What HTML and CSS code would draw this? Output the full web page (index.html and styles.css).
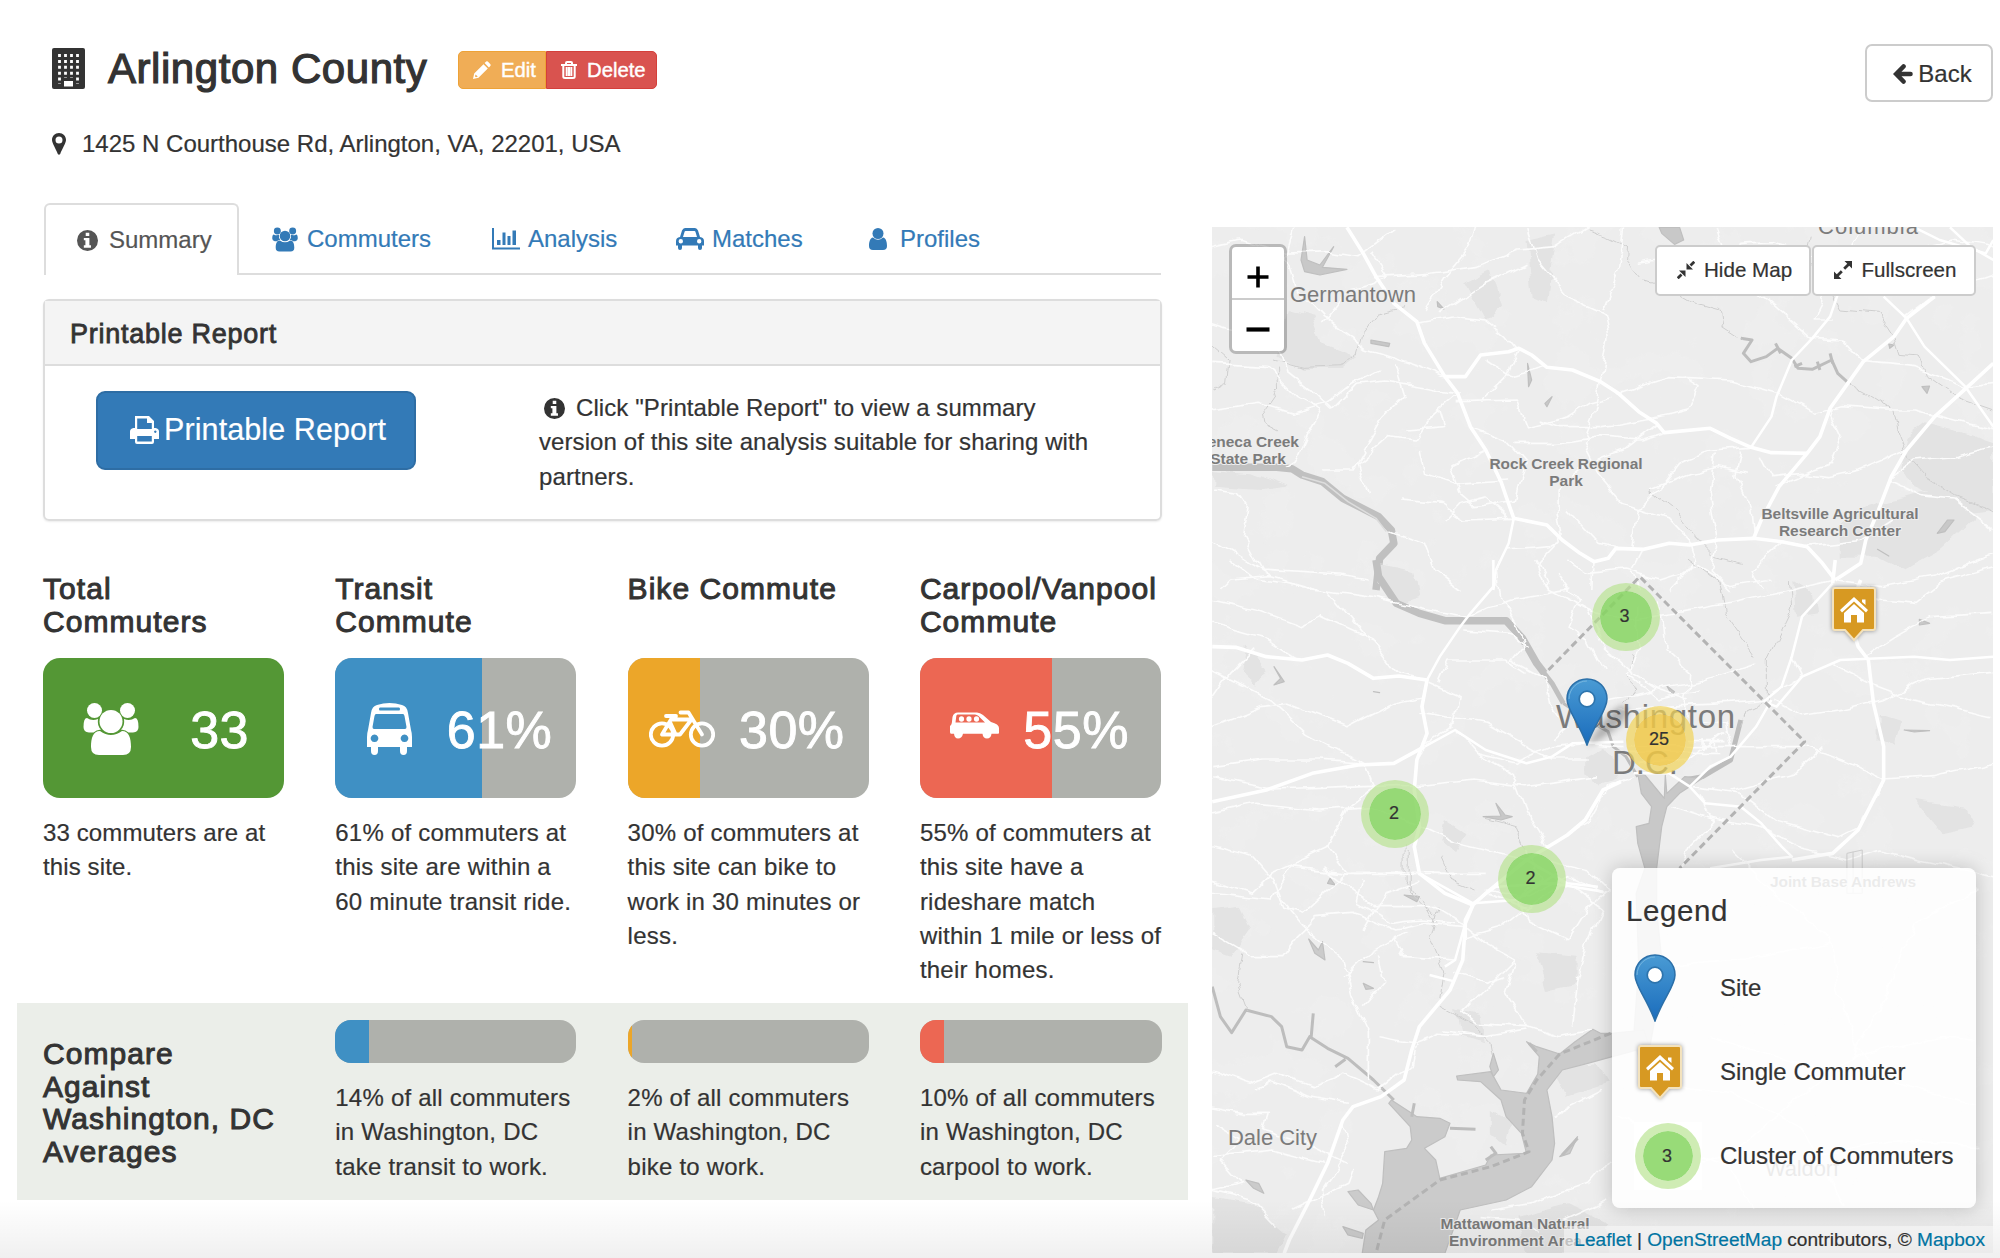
FILE: index.html
```html
<!DOCTYPE html>
<html lang="en">
<head>
<meta charset="utf-8">
<title>Arlington County</title>
<link rel="stylesheet" href="styles.css">
</head>
<body>
<svg class="sprite" aria-hidden="true">
  <defs>
    <linearGradient id="pinfill" x1="0" y1="0" x2="0" y2="1"><stop offset="0" stop-color="#4a9bd4"/><stop offset="1" stop-color="#1a6cbc"/></linearGradient>
    <symbol id="users" viewBox="0 0 56 52"><circle cx="11.5" cy="7.5" r="7.5"/><circle cx="44.5" cy="7.5" r="7.5"/><circle cx="28" cy="18.5" r="11.5"/><path d="M8 44C8 35 10 28 17 28Q28 36 39 28C46 28 48 35 48 44Q48 52 40 52H16Q8 52 8 44ZM.5 24Q.5 15 4 15Q9 18.500 15 16Q14 23 18 26.500Q13 27 10.500 29.500H6Q.5 29 .5 24ZM55.500 24Q55.500 15 52 15Q47 18.500 41 16Q42 23 38 26.500Q43 27 45.500 29.500H50Q55.500 29 55.500 24Z"/></symbol>
    <symbol id="info" viewBox="0 0 20 20"><path fill-rule="evenodd" d="M10 0a10 10 0 1 1 0 20a10 10 0 0 1 0-20ZM8.300 2.500V5.600H11.700V2.500ZM6.500 7.500V9.700H8V14.500H6.500V16.800H13.300V14.500H11.800V7.500Z"/></symbol>
    <symbol id="pin" viewBox="0 0 42 68"><path d="M21 1C9.500 1 1 9.800 1 21C1 32 12 43 21 67C30 43 41 32 41 21C41 9.800 32.500 1 21 1Z" fill="url(#pinfill)" stroke="#2b6fa8" stroke-width="1.500"/><path d="M21 3C11 3 3 11 3 21" fill="none" stroke="#77b6df" stroke-width="1"/><circle cx="21" cy="21" r="7.800" fill="#fff" stroke="#2d74ad" stroke-width="1.700"/></symbol>
    <symbol id="home" viewBox="0 0 48 60"><path d="M5 4H43Q45 4 45 6V44Q45 46 43 46H33L24 56L15 46H5Q3 46 3 44V6Q3 4 5 4Z" fill="#d79922" stroke="#f3e2bd" stroke-width="2"/><path d="M24 13L38 26L36 28.500L24 17.500L12 28.500L10 26ZM32 15.500H35.500V21L32 18ZM24 20L34 29V38.500H27V31H21V38.500H14V29Z" fill="#fff"/></symbol>
  </defs>
</svg>
<div class="page">
  <header class="header">
    <div class="heading">
      <div class="title-row">
        <svg class="i-building" viewBox="0 0 33 41"><rect width="33" height="41" rx="2" fill="#333"/><path d="M7.500 6v30M13.500 6v24M19.500 6v24M25.500 6v30" stroke="#fff" stroke-width="2.800" stroke-dasharray="3 2.900" fill="none"/><path d="M12 33h9v5.500h-9z" fill="#fff"/></svg>
        <h1>Arlington County</h1>
        <div class="btn-group">
          <a class="btn-sm edit"><svg width="18" height="18" viewBox="0 0 18 18" fill="#fff"><path fill-rule="evenodd" d="M0 18L1.200 12.500L10.500 3.200L14.800 7.500L5.500 16.800ZM2.500 13.500L2 15.500L3 16.200L4.800 15.500ZM11.600 2.100L13.200 .5Q14 0 14.800 .6L17.400 3.200Q18 4 17.500 4.800L15.900 6.400Z"/></svg>Edit</a>
          <a class="btn-sm delete"><svg width="16" height="18" viewBox="0 0 16 18" fill="none" stroke="#fff" stroke-width="2"><path d="M0 4H16M2.300 4V15.500Q2.300 17 4 17H12Q13.700 17 13.700 15.500V4M5 4V2Q5 1 6 1H10Q11 1 11 2V4M5.700 6V15M8 6V15M10.300 6V15"/></svg>Delete</a>
        </div>
      </div>
      <div class="address"><svg width="14" height="22" viewBox="0 0 14 22"><path fill="#333" fill-rule="evenodd" d="M7 0C3 0 0 3 0 7C0 10 4 16 5.800 21Q7 22.500 8.200 21C10 16 14 10 14 7C14 3 11 0 7 0ZM7 3.500A3.500 3.500 0 1 1 7 10.500A3.500 3.500 0 0 1 7 3.500Z"/></svg>1425 N Courthouse Rd, Arlington, VA, 22201, USA</div>
    </div>
    <a class="back"><svg width="20" height="20" viewBox="0 0 20 20" fill="none" stroke="#333" stroke-width="4.600" stroke-linecap="round"><path d="M3.500 10H17.500M10.500 2.500L3.200 10L10.500 17.500"/></svg>Back</a>
  </header>

  <div class="main">
    <section class="left">
      <nav class="tabs">
        <a class="tab active t1"><svg width="21" height="21"><use href="#info"/></svg>Summary</a>
        <a class="tab t2"><svg width="26" height="25" fill="#337ab7"><use href="#users"/></svg>Commuters</a>
        <a class="tab t3"><svg width="28" height="22" viewBox="0 0 28 22" fill="#337ab7"><path d="M0 0H2V19.500H28V21.500H0ZM5 12H8.500V17H5ZM10.500 4.500H13.500V17H10.500ZM15.500 8H18.500V17H15.500ZM20.500 2.500H24V17H20.500Z"/></svg>Analysis</a>
        <a class="tab t4"><svg width="28" height="22" viewBox="0 0 28 22" fill="#337ab7"><path fill-rule="evenodd" d="M4 9L6 2.500Q7 0 9 0H19Q21 0 22 2.500L24 9Q28 9.500 28 13V17.500H26V20Q26 22 24 22Q22 22 22 20V17.500H6V20Q6 22 4 22Q2 22 2 20V17.500H0V13Q0 9.500 4 9ZM7 9H21L19.500 4Q19.300 3 18.500 3H9.500Q8.700 3 8.500 4ZM4.800 11A2.200 2.200 0 1 0 4.800 15.400A2.200 2.200 0 1 0 4.800 11ZM23.200 11A2.200 2.200 0 1 0 23.200 15.400A2.200 2.200 0 1 0 23.200 11Z"/></svg>Matches</a>
        <a class="tab t5"><svg width="18" height="22" viewBox="0 0 18 22" fill="#337ab7"><circle cx="9" cy="5.500" r="5.500"/><path d="M4 9.500Q9 14 14 9.500C17 10 18 14 18 18Q18 22 14 22H4Q0 22 0 18C0 14 1 10 4 9.500Z"/></svg>Profiles</a>
      </nav>

      <div class="panel">
        <div class="panel-head">Printable Report</div>
        <div class="panel-body">
          <a class="print-btn"><svg width="29" height="28" viewBox="0 0 29 28"><path fill="#fff" fill-rule="evenodd" d="M5 0H19L24 5V12H25.500Q29 12.500 29 15.500V23H24V26Q24 28 22 28H7Q5 28 5 26V23H0V15.500Q0 12.500 3.500 12H5ZM7.200 2.400V13H21.800V7H17V2.400ZM7.200 20V25.600H21.800V20ZM25.300 14.500a1.200 1.200 0 1 0 .01 0Z"/></svg>Printable Report</a>
          <p class="note"><svg width="21" height="21" fill="#333"><use href="#info"/></svg>Click "Printable Report" to view a summary version of this site analysis suitable for sharing with partners.</p>
        </div>
      </div>

      <div class="stats">
        <div class="stat">
          <h2>Total<br>Commuters</h2>
          <div class="tile green"><svg width="56" height="52" fill="#fff"><use href="#users"/></svg><b>33</b></div>
          <p>33 commuters are at this site.</p>
        </div>
        <div class="stat">
          <h2>Transit<br>Commute</h2>
          <div class="tile blue"><span class="fill" style="width:61%"></span><svg width="45" height="52" viewBox="0 0 45 52"><path fill="#fff" fill-rule="evenodd" d="M4 10Q5 3 10 2Q22.500-2 35 2Q40 3 41 10L44 27Q45 30 45 34V44H40V48Q40 52 36.500 52Q33 52 33 48V44H11V48Q11 52 7.500 52Q4 52 4 48V44H0V34Q0 30 1 27ZM13 4.500Q12 4.500 12 6Q12 7.500 13 7.500H32Q33 7.500 33 6Q33 4.500 32 4.500ZM9 11Q8 11 7.500 13L5.500 24Q5.500 26 7 26H38Q39.500 26 39.500 24L37.500 13Q37 11 36 11ZM7.500 31.500a3.800 3.800 0 1 0 .01 0ZM37.500 31.500a3.800 3.800 0 1 0 .01 0Z"/></svg><b>61%</b></div>
          <p>61% of commuters at this site are within a<br>60 minute transit ride.</p>
        </div>
        <div class="stat">
          <h2>Bike Commute</h2>
          <div class="tile orange"><span class="fill" style="width:30.200%"></span><svg width="66" height="38" viewBox="0 0 66 38" fill="none" stroke="#fff" stroke-width="3.800" stroke-linecap="round" stroke-linejoin="round"><circle cx="13" cy="24.500" r="11.200"/><circle cx="53" cy="24.500" r="11.200"/><path d="M13 24.500H31L42.500 9.500H22L13 24.500M17 6H27M23.500 6L22 9.500M21 12L26 23M31.500 2.500H39.500L53 24.500"/></svg><b>30%</b></div>
          <p>30% of commuters at this site can bike to work in 30 minutes or less.</p>
        </div>
        <div class="stat">
          <h2>Carpool/Vanpool<br>Commute</h2>
          <div class="tile red"><span class="fill" style="width:55%"></span><svg width="49" height="27" viewBox="0 0 49 27"><path fill="#fff" fill-rule="evenodd" d="M2.500 5Q3.500 .5 8 .5H27Q30 .5 33 3L41 10Q49 12 49 16V21Q49 21.700 48 21.700H41.500Q41 26.500 37 26.500Q33 26.500 32.500 21.700H13Q12 26.500 8 26.500Q4.500 26.500 4 21.700H1Q0 21.700 0 20V14Q1.500 13 1.800 11ZM7.500 2.500Q6.500 2.500 6.300 4L5.500 10.500H35L28.500 4Q27 2.500 25 2.500Z"/><g fill="#fff"><ellipse cx="11.500" cy="7" rx="2.600" ry="2.700"/><ellipse cx="19" cy="7" rx="2.600" ry="2.700"/><ellipse cx="26.500" cy="7" rx="2.600" ry="2.700"/></g></svg><b>55%</b></div>
          <p>55% of commuters at this site have a<br>rideshare match<br>within 1 mile or less of their homes.</p>
        </div>
      </div>

      <div class="compare">
        <h2>Compare<br>Against<br>Washington, DC<br>Averages</h2>
        <div class="cmp blue"><div class="bar"><span class="fill" style="width:14%"></span></div><p>14% of all commuters in Washington, DC<br>take transit to work.</p></div>
        <div class="cmp orange"><div class="bar"><span class="fill" style="width:2%"></span></div><p>2% of all commuters<br>in Washington, DC<br>bike to work.</p></div>
        <div class="cmp red"><div class="bar"><span class="fill" style="width:10%"></span></div><p>10% of all commuters in Washington, DC<br>carpool to work.</p></div>
      </div>
    </section>

    <section class="map">
      <svg class="base" viewBox="1212 227 781 1026">
        <defs>
          <filter id="land" x="0" y="0" width="100%" height="100%"><feTurbulence type="fractalNoise" baseFrequency=".02 .02" numOctaves="5" seed="8"/><feColorMatrix values="0 0 0 0 .87  0 0 0 0 .87  0 0 0 0 .87  16 0 0 0 -9.400"/></filter>
          <filter id="wiggle" x="-5%" y="-5%" width="110%" height="110%"><feTurbulence type="fractalNoise" baseFrequency=".018" numOctaves="3" seed="3"/><feDisplacementMap in="SourceGraphic" scale="26" xChannelSelector="R" yChannelSelector="G"/></filter>
        </defs>
        <rect x="1212" y="227" width="781" height="1026" fill="#ededed"/>
        <rect x="1212" y="227" width="781" height="1026" filter="url(#land)" opacity=".55"/>

        <!-- northern sheet -->
        <g transform="translate(1200 210) scale(.5102 .33333)">
          <g class="wood">
            <path d="M1385 680L1420 640L1480 660L1555 700V900L1500 910L1480 880L1400 830L1375 770Z"/>
            <path d="M1250 950L1290 900L1330 880L1420 850L1490 860L1520 920L1450 1020L1380 1080L1330 1040L1250 1040Z"/>
            <path d="M170 300L220 320L240 400L310 440L280 480L200 480L150 440Z"/>
            <path d="M24 780L100 790L170 830L120 840L24 830Z"/><path d="M640 90L700 70L690 170L680 280L650 260ZM520 220L570 180L590 290L560 330Z"/>
          </g>
          <g class="shore"><path d="M24 772H150L180 776L200 795L240 815L280 865L350 920L375 960L380 1000L352 1045L345 1140"/></g>
          <g class="island"><path d="M200 800L245 820L290 875L345 925L365 965"/></g>
          <g class="water">
            <path d="M205 80L210 150L235 165L262 110L240 172L288 178L235 195L205 185L198 150ZM900 52H940L948 90L930 103L905 70ZM335 390L372 400L370 410L335 400ZM642 460L650 510L644 530ZM690 560L680 590L676 580ZM1415 530L1430 528L1425 550ZM1350 402L1360 405L1352 415ZM1445 970L1465 930L1478 930L1460 965ZM1328 1018L1350 1038ZM465 275L478 297L466 290Z"/>
          </g>
          <g class="creek"><path d="M1060 385L1082 390L1065 430L1080 455L1110 440L1132 415L1160 445L1172 475L1200 478L1238 450L1250 490L1268 515"/><path d="M1128 400L1138 430M1210 455L1215 480M1235 430L1240 460M1165 470L1180 460"/></g>
          <g class="thin">
            <path d="M760 60L800 80L840 110L838 150L870 210L930 240L975 280L1020 300L1025 350L1060 385M1268 515L1310 550L1360 600L1370 680L1385 740L1420 800L1480 860L1555 905"/>
            <path d="M24 410L55 450L50 520L24 540M150 470L152 540L125 600L130 640L155 660M145 450L200 475L280 470L310 430L320 370L350 310L400 290"/>
            <path d="M1200 80L1190 150L1230 220L1260 300L1330 310L1360 380L1370 430L1410 435L1425 500L1480 560L1555 600"/>
            <path d="M880 840L930 900L970 980L1010 1040L1060 1060"/>
          </g>
          <g class="minor">
            <path d="M190 52L170 150L185 230L240 320L330 420L430 470L480 500M24 110L80 90L160 130L250 125L310 140L380 60M345 200L450 190L540 170L620 120L700 110L760 52M340 130L370 200L345 220L290 240L240 340"/>
            <path d="M24 340L150 400L170 480L220 540L260 600L310 520L360 510L440 530L505 550M24 460L130 470L190 560L240 600L210 680L190 750L170 770M505 550L460 610L420 690L370 680L310 760L330 850M470 600L480 650L400 660M24 600L110 580L180 610L250 580L300 520L350 480"/>
            <path d="M425 340L500 320L560 330L600 380L620 420M540 52L530 110L480 200L440 300M640 160L560 220L470 310M640 52L660 150L720 260L790 310L800 380L785 515M830 52L820 180L790 300M680 472L610 500L560 450M625 415L600 500L550 575M505 575L620 570L640 650L720 620L760 580L810 560"/>
            <path d="M530 650L600 690L640 760L620 870L540 890L510 850L490 770L560 720M600 810L500 820L440 790L430 720M380 460L400 560L360 620L300 780L240 780M785 515L770 620L750 700L780 790L830 880L910 920L960 1000M660 630L700 650L790 650L900 620L960 600L980 530L950 500"/>
            <path d="M895 640L830 720L760 760L700 840L700 910L710 990M1080 712L1000 720L940 760L900 840L860 900L850 1015M820 550L920 500L1040 510L1130 550L1200 610L1260 590L1350 600L1400 600L1500 640L1555 660M910 668L860 690L780 680L700 700L620 700"/>
            <path d="M1010 52L1040 180L1130 290L1200 385L1260 390L1300 455M860 160L940 140L1010 170L1060 100L1120 95L1230 150M1230 240L1200 330L1240 330M1300 52L1280 100L1310 130L1400 120L1480 90L1555 110M1380 320L1440 250L1555 190M1300 455L1400 470L1500 530L1555 520M1235 595L1260 680L1240 760L1200 780L1130 830"/>
            <path d="M1100 740L1120 800L1180 790L1230 800L1290 780L1385 720M1350 810L1420 860L1480 870L1555 960M1355 800L1400 750L1480 740L1555 710M1060 720L1050 800L1080 900L1085 985M1010 730L1000 850L1015 990M880 840L960 790L1020 770L1070 790M960 1005L970 1060L920 1140M870 1018L850 1080L860 1140"/>
            <path d="M24 840L75 850L95 890L85 980L120 1080L280 1095L330 1110M24 990L140 1100L230 1140M140 1100L60 1110L40 1140M375 960L440 1000L460 1080L510 1140M480 930L510 880L560 860L610 925M390 870L470 880L520 930L615 925M600 1020L690 1010L710 990L660 1070L680 1140M772 1055L770 1140M815 1015L780 1000L720 900M1015 990L1000 1080L1040 1140M1140 995L1080 1080L1100 1140M1190 1010L1300 990L1360 930M1245 1110L1340 1130L1440 1100L1555 1030"/>
          </g>
          <g class="mid">
            <path d="M615 925L605 1000L580 1080L575 1140M1262 200L1235 320L1200 385L1160 450L1130 560L1120 620L1080 712M1340 260L1385 325L1420 410L1500 530L1555 650M1470 52L1510 110L1555 150"/>
            <path d="M1400 52L1450 90L1540 130L1555 90"/>
          </g>
          <g class="major">
            <path d="M288 52L320 130L345 200L380 280L425 335L440 400L480 500L505 550L530 650L560 720L590 815L600 860L615 925L680 945L710 990L745 1030L772 1055L800 1045L815 1015L870 1018L920 1000L960 1005L1015 990L1085 985L1140 995L1190 1010L1220 1060L1245 1110"/>
            <path d="M480 500L520 500L550 435L605 425L625 415L650 435L680 472L730 480L785 515L820 550L860 605L895 640L910 668L1000 655L1040 685L1080 712L1120 728L1190 730"/>
            <path d="M1440 260L1385 325L1360 380L1300 455L1235 595L1215 680L1190 730L1135 830L1100 930L1085 985M1555 460L1505 530L1440 620L1385 720L1355 800L1330 900L1305 990L1295 1060L1245 1110"/>
          </g>
        </g>

        <!-- central sheet -->
        <g transform="translate(1200 560) scale(.5102 .33333)">
          <g class="wood">
            <path d="M1165 60L1205 100L1210 160L1170 170Z"/><path d="M350 10L420 30L430 110L390 130L350 70Z"/><path d="M90 250L130 330L110 380L80 340Z"/><path d="M1330 470L1370 490L1360 560L1330 540ZM1400 720L1500 740L1520 800L1450 820ZM480 780L520 820L500 880L470 840ZM757 590L790 560L810 600L815 660L780 680L757 640Z"/>
          </g>
          <g class="shore"><path d="M345 0L350 50L385 130L430 160L480 182L600 182L632 235L660 310L675 340"/><path class="narrow" d="M672 335L690 370L712 430"/></g>
          <g class="creek"><path d="M712 430L760 480L800 515L810 560L835 590L858 650"/><path class="w2" d="M1060 480L1050 540L1040 600L985 650L950 660"/></g>
          <g class="water">
            <path d="M858 640L872 645L910 715L912 645L915 700L950 650L985 655L940 700L915 740L905 800L895 925V1050L905 1200L890 1390L870 1560L850 1430L860 1220L855 1000L872 925L858 850L855 800L880 790L885 740L865 700Z"/>
            <path d="M915 378L930 395L925 405ZM555 770L590 768L580 730L598 765L612 770L590 780ZM145 320L165 365L145 375L158 355ZM340 395L352 398ZM1410 178L1430 190L1410 195ZM1380 510L1430 512L1400 516ZM400 1005L430 1010L425 1025ZM255 955L265 975L250 970Z"/>
          </g>
          <g class="thin"><path d="M1155 60L1160 140L1110 300L1110 420L1070 450L1060 500M850 280L840 340L850 380L830 430M960 0L1020 70L1030 160L1090 290M400 850L400 960L440 1040L460 1090M560 775L620 800L640 870M470 890L490 960L540 990"/></g>
          <g class="minor">
            <path d="M24 120L110 150L200 200L240 170L340 240L390 340L440 360M24 190L120 230L190 300M60 0L110 60L250 90L330 240M250 90L340 110L520 170L560 140L610 120L730 90M580 0L590 120L640 240M660 0L690 90L760 150L790 260L840 330L900 390L960 420M700 40L740 120L720 200L760 240L790 330"/>
            <path d="M24 330L140 420L210 520L320 610M24 500L120 440L170 430L290 500L380 430L440 410M24 620L120 600L240 600L320 610M24 650L150 690L320 680L440 675L540 660L640 680L780 650M24 760L110 730L240 750L330 740L420 790L500 850L640 900L720 975"/>
            <path d="M320 610L340 680L290 740L250 860L290 940L430 940L560 940M24 420L60 340L110 260M450 370L510 410L500 490L440 550L425 600M500 510L540 580L620 610L690 560L760 550L830 560M430 460L560 490L620 540L690 600L760 600M640 240L610 300L680 360L690 430L720 500L690 540M520 210L610 220L640 260M470 370L490 300L600 300L640 340"/>
            <path d="M760 150L840 180L930 160L1040 130L1160 90L1240 60M720 0L760 40L830 30L900 60L980 20L1040 80L1120 60M860 140L860 260L840 340L900 420L980 390M900 130L910 270L960 340L950 470M800 420L860 400L990 360L1090 310M820 450L900 440L1040 430L1110 420M970 480L1030 490L1040 560L1185 560M840 560H1120M830 580H1020M860 610L960 600L1030 520M990 540V570M1010 540V575M960 545H1030"/>
            <path d="M1120 420L1180 470L1260 450L1340 420L1420 360L1555 340M1240 310L1330 380L1400 420L1555 470M1300 290L1360 230L1430 170L1555 160M1240 80L1330 120L1400 130L1460 60L1555 20M1160 290L1180 350L1120 400M1185 560L1260 600L1340 660L1440 650L1555 610M970 680L1060 700L1130 780L1250 830L1290 800L1340 660M980 700L1000 770L1090 800L1180 870L1270 900L1330 870L1555 950M930 740L1010 780L960 860L940 925M1040 690L1160 640L1220 560"/>
            <path d="M24 960L100 1000L140 940L250 860M24 860L100 890L140 960L160 1040L200 1060L270 960L290 940M320 960L310 1030L380 1090L430 1080L500 1090M430 960L360 1000L320 1110M640 870L670 960L620 1010L640 1080L720 1140M560 990L640 1010L720 950L790 1000M680 860L640 760L610 640L540 580M720 825L760 790L800 680L850 650M680 900L760 930L800 990L760 1040L720 1140"/>
          </g>
          <g class="mid">
            <path d="M1105 425L1140 380L1160 290L1180 170L1240 70M1105 425L1130 440L1180 350L1255 300L1400 290L1470 300L1555 290M960 680L1000 620L1040 590L1090 500L1120 420M780 980L720 970L640 900M850 640L920 640L960 680L990 730L1060 740L1100 790L1140 860L1160 890L1100 900L1000 925"/>
            <path d="M575 0L575 80L530 160L510 200L470 290L445 360L435 440M440 560L500 510L560 570L640 610L690 590L730 550L830 545"/>
          </g>
          <g class="major">
            <path d="M24 260L70 262L130 290L200 300L250 285L290 310L340 355L390 348L445 360L435 440L445 520L425 600L420 690L430 800L420 860L430 940L480 1000L535 1035L560 1000L640 900L720 825L755 780L790 690L825 665"/>
            <path d="M24 725L130 690L220 640L310 615L380 610L440 560M535 1035L520 1080V1140M1245 0L1240 70M1295 60L1270 160L1290 260L1310 300L1320 430L1340 560V660L1290 810L1240 880L1160 900"/>
          </g>
          <path class="border" d="M683 330L862 50L1185 545L940 925"/>
          <g class="runway"><path d="M1268 880L1298 870V1000H1268ZM1280 875V1000"/></g>
        </g>

        <!-- southern sheet -->
        <g transform="translate(1200 850) scale(.5102 .33333)">
          <g class="wood">
            <path d="M24 180L80 170L100 230L60 320L24 300Z"/><path d="M660 310L740 320V400L680 420Z"/><path d="M24 1040L100 1060L170 1150L150 1210H24Z"/><path d="M500 480L550 500L560 580L510 560ZM690 650L780 640L800 700L720 740ZM570 780L610 820L600 890L570 850ZM620 1100L720 1060L800 1120V1210H640Z"/>
          </g>
          <g class="water bay">
            <path d="M808 550L785 550L770 538L735 575L705 612L660 590L640 575L665 620L662 672L640 730L590 720L570 665L503 678L505 690L550 695L590 750L600 800L630 850L640 910L570 915L560 945L470 985L462 930L440 895L480 860L490 820L470 805L425 800L415 790L375 750L370 760L412 830L415 870L405 895L362 905L358 1000L350 1040L340 1080L350 1110L325 1140L318 1210H480L510 1080L600 1050L650 1010L690 930L695 880L690 800L680 720L710 660L760 640L808 620L880 590L870 540Z"/>
            <path d="M213 267L232 300L240 275L245 330L225 310ZM290 1025L310 1020L335 1060L340 1080L310 1065ZM280 1130L320 1150L318 1165L290 1155ZM90 990L115 1000L125 1030L105 1015ZM320 400L340 415L325 418ZM320 335L340 338ZM575 610L585 660L575 680L568 650ZM740 860L725 910L705 920L730 880Z"/>
          </g>
          <g class="creek"><path d="M24 410L40 500L62 548L90 480L140 500L160 530L170 590L200 600L215 560L250 595L290 625L340 690L380 750M222 490L218 560M265 650L285 628M420 760L415 800M490 835L540 838M570 890L580 910L560 930M645 580L660 605M740 865L710 915"/></g>
          <g class="thin"><path d="M80 310L70 400L90 480M465 170L450 260L480 370L470 470L530 520L570 580L575 620M410 0V120L460 200"/></g>
          <g class="minor">
            <path d="M24 250L100 320L160 320L190 260L230 200L300 190L380 240L440 220L520 230M150 130L200 220L280 330L300 440L330 540V690M24 130L140 150L180 50L290 70H500M240 50L340 170L460 170L520 225M380 260L400 320L500 330M320 470L360 400L350 310M280 380L320 320L400 250"/>
            <path d="M520 230L560 280L620 330L560 420L515 490L540 520L640 530L700 560L770 540M620 330L600 430L640 530M560 130L640 170L720 100L790 180L760 280L740 400L730 530M520 260L590 230L630 180M500 370L560 400L600 380M480 540L560 560L640 540"/>
            <path d="M24 660L100 700L150 670L220 710L280 670L350 720M24 770L90 790H130L120 840L210 880L290 940M24 820L80 870L40 930L80 1000L24 1020L100 1050L150 1130M24 920L140 900L240 940M110 720L140 690L220 740L290 760M350 560L420 580L470 550L560 560M420 580L410 650L350 720M280 820L290 900L240 1020L250 1100M180 1080L290 1000L300 960M690 800L790 720M570 1080L650 1060L760 1000L800 930M550 1100L620 1110L660 1150M670 1140L800 1050"/>
            <path d="M1040 0L1120 120L1240 270L1250 420L1290 600L1360 700L1520 760M890 350L1100 320L1240 280M1520 120L1400 220L1340 450L1280 620L1160 760L1050 900L900 980M1000 560L1200 650M860 700L1040 730L1180 830L1260 1070M1280 620L1450 560L1520 570M1520 890L1350 870L1200 920M820 800L1040 950L1080 1070"/>
          </g>
          <g class="mid"><path d="M430 70L535 160L580 110L690 100L790 125M535 160L620 150L700 70M520 220L500 330L480 350M450 375L500 395"/></g>
          <g class="major"><path d="M520 225L515 330L490 420L430 530L415 600L400 690L355 740L300 770L280 810L250 940L215 1050L175 1170L165 1210M535 165L520 220"/></g>
          <path class="border" d="M805 550L705 612L660 690L636 750L632 850L645 905L570 950L470 990L362 1110L345 1210"/>
        </g>

        <g class="town"><text x="1290" y="301.500" textLength="126">Germantown</text><text x="1818" y="233.500" textLength="100">Columbia</text><text x="1228" y="1145" textLength="89">Dale City</text><text x="1765" y="1175.500" textLength="74">Waldorf</text></g>
        <g class="city"><text x="1556" y="727.500" textLength="179">Washington</text><text x="1612" y="773.500" textLength="66">D.C.</text></g>
        <g class="park">
          <text x="1299" y="447" text-anchor="end">Seneca Creek</text><text x="1286" y="464" text-anchor="end">State Park</text>
          <text x="1566" y="468.500" text-anchor="middle" textLength="153">Rock Creek Regional</text><text x="1566" y="486" text-anchor="middle">Park</text>
          <text x="1840" y="518.500" text-anchor="middle" textLength="157">Beltsville Agricultural</text><text x="1840" y="535.500" text-anchor="middle" textLength="122">Research Center</text>
          <text x="1843" y="887" text-anchor="middle" textLength="146">Joint Base Andrews</text>
          <text x="1515" y="1229" text-anchor="middle" textLength="149">Mattawoman Natural</text><text x="1449" y="1246">Environment Area</text>
        </g>
      </svg>

      <div class="cluster" style="left:379.500px;top:356px">3</div>
      <div class="cluster" style="left:149px;top:552.500px">2</div>
      <div class="cluster" style="left:285.500px;top:617.500px">2</div>
      <svg class="shadow" viewBox="0 0 50 70"><path d="M0 68C12 50 22 32 34 28C44 27 42 38 34 46C26 54 10 64 0 68Z"/></svg>
      <div class="cluster yellow" style="left:414px;top:479px">25</div>
      <svg class="marker site"><use href="#pin"/></svg>
      <svg class="marker house"><use href="#home"/></svg>

      <div class="zoom"><a><svg width="22" height="22"><path d="M11 0.500V21.500M.5 11H21.500" stroke="#000" stroke-width="3.600"/></svg></a><a><svg width="24" height="22"><path d="M.5 10.500H23.500" stroke="#000" stroke-width="4.200"/></svg></a></div>
      <div class="map-btns">
        <a class="hide"><svg width="18" height="18" viewBox="0 0 18 18"><path d="M.7 17.300L4.500 13.500M17.300 .7L13.500 4.500" stroke="#333" stroke-width="2.800"/><path fill="#333" d="M2 9.500H8.500V16L6.500 14L4 11.500ZM9.500 2V8.500H16L14 6.500L11.500 4Z"/></svg>Hide Map</a>
        <a class="full"><svg width="18" height="18" viewBox="0 0 18 18"><path d="M2.500 15.500L7.800 10.200M10.200 7.800L15.500 2.500" stroke="#333" stroke-width="2.800"/><path fill="#333" d="M0 10.500L7.500 18H0ZM10.500 0H18V7.500Z"/></svg>Fullscreen</a>
      </div>

      <div class="legend">
        <h3>Legend</h3>
        <div class="row"><span><svg class="lg-pin" width="42" height="68"><use href="#pin"/></svg></span>Site</div>
        <div class="row"><span><svg class="lg-home" width="48" height="60"><use href="#home"/></svg></span>Single Commuter</div>
        <div class="row"><span><i class="lg-box"><i class="cluster static">3</i></i></span>Cluster of Commuters</div>
      </div>
      <div class="attribution"><a>Leaflet</a> | <a>OpenStreetMap</a> contributors, © <a>Mapbox</a></div>
    </section>
  </div>
  <div class="fade"></div>
</div>
</body>
</html>
```
FILE: styles.css
```css
* { box-sizing: border-box; }
body { margin: 0; background: #fff; color: #333; font: 24px/34.3px "Liberation Sans", Arial, sans-serif; -webkit-text-stroke: .2px; }
h1, h2, h3, p { margin: 0; font-weight: 400; }
svg { flex: none; display: block; }
.sprite { position: absolute; width: 0; height: 0; }
.page { position: relative; width: 2000px; height: 1258px; overflow: hidden; }

.header { height: 203px; padding: 44px 7px 0 52px; display: flex; justify-content: space-between; align-items: flex-start; }
.title-row { display: flex; align-items: center; height: 48px; }
.i-building { width: 33px; height: 41px; }
h1 { margin-left: 23px; width: 350px; font-size: 42px; line-height: 48px; padding-top: 1px; letter-spacing: .55px; white-space: nowrap; -webkit-text-stroke: 1.2px #333; }
.btn-group { display: flex; margin-top: 4px; color: #fff; font-size: 20.300px; line-height: 36px; }
.btn-sm { display: flex; align-items: center; height: 38px; border: 1px solid; -webkit-text-stroke: .4px #fff; }
.edit { width: 88px; padding-left: 14px; gap: 10px; background: #f0ad56; border-color: #eea236; border-radius: 5px 0 0 5px; }
.delete { width: 111px; padding-left: 14px; gap: 10px; background: #d9534f; border-color: #d43f3a; border-radius: 0 5px 5px 0; }
.address { display: flex; align-items: center; gap: 16px; margin-top: 35px; white-space: nowrap; }
.back { width: 128px; height: 58px; display: flex; align-items: center; justify-content: center; gap: 5px; padding: 2px 0 0 7px; border: 2px solid #ccc; border-radius: 7px; }

.main { display: flex; height: 1055px; }
.left { width: 1188px; flex: none; }
.tabs { display: flex; height: 72px; margin: 0 27px 0 44px; box-shadow: inset 0 -2px #ddd; }
.tab { display: flex; align-items: center; padding: 0 0 0 32px; color: #337ab7; }
.active { background: #fff; color: #555; fill: #555; border: 2px solid #ddd; border-bottom: 0; border-radius: 6px 6px 0 0; padding-left: 31px; }
.t1 { width: 195px; gap: 11px; margin-right: 1px; }
.t2 { width: 220px; gap: 9px; }
.t3 { width: 184px; gap: 8px; }
.t4 { width: 193px; gap: 8px; }
.t5 { gap: 13px; }

.panel { margin: 24px 26px 0 43px; height: 222px; border: 2px solid #ddd; border-radius: 6px; box-shadow: 0 1px 2px rgba(0,0,0,.08); }
.panel-head { height: 65px; padding-left: 25px; background: #f4f4f4; border-bottom: 2px solid #ddd; font-size: 27px; line-height: 66px; letter-spacing: .75px; -webkit-text-stroke: .8px #333; }
.panel-body { display: flex; padding: 25px 0 0 51px; }
.print-btn { display: flex; align-items: center; gap: 5px; width: 320px; height: 79px; padding-left: 32px; background: #337ab7; border: 2px solid #2e6da4; border-radius: 9px; color: #fff; font-size: 30.500px; white-space: nowrap; letter-spacing: .1px; padding-bottom: 2px; }
.note { width: 570px; margin-left: 123px; letter-spacing: .09px; }
.note svg { display: inline-block; margin: 0 11px 0 5px; vertical-align: -3px; }

.stats { display: grid; grid-template-columns: repeat(4, 241px); column-gap: 51.300px; height: 430px; margin: 52px 0 0 43px; }
h2 { font-size: 30px; line-height: 32.500px; letter-spacing: 1.050px; white-space: nowrap; -webkit-text-stroke: 1px #333; }
.stat h2 { height: 85px; }
.stat p { margin-top: 18px; letter-spacing: .12px; }
.stat + .stat p { letter-spacing: .22px; margin-right: -4px; }
.tile { position: relative; display: flex; align-items: center; height: 140px; border-radius: 17px; overflow: hidden; background: #afb1ac; color: #fff; }
.tile svg, .tile b { position: relative; }
.tile b { font-size: 52px; font-weight: 400; margin: 4px 24px 0 auto; letter-spacing: .5px; -webkit-text-stroke: .9px #fff; }
.tile svg { margin-top: 1px; }
.green { background: #549735; }
.green svg { margin-left: 40px; }
.tile.green b { margin-right: 35px; }
.tile.blue svg { margin-left: 32px; }
.tile.orange svg { margin-left: 21px; }
.tile.red svg { margin: -6px 0 0 30px; }
.tile.red b { margin-right: 32px; }
.fill { position: absolute; left: 0; top: 0; bottom: 0; }
.blue .fill { background: #3f90c4; }
.orange .fill { background: #eca629; }
.red .fill { background: #ec6753; }

.compare { display: grid; grid-template-columns: 241px 241px 241px 242px; column-gap: 51.300px; width: 1171px; height: 197px; margin-left: 17px; padding: 17px 0 0 26px; background: #ebeee9; }
.compare h2 { margin-top: 18px; }
.bar { position: relative; height: 43px; border-radius: 16px; overflow: hidden; background: #afb1ac; }
.cmp p { margin: 18px -8px 0 0; letter-spacing: .22px; }

.map { position: relative; width: 781px; height: 1026px; margin: 24px 0 0 24px; overflow: hidden; }
.base { width: 781px; height: 1026px; -webkit-text-stroke: 0; }
.base path { vector-effect: non-scaling-stroke; stroke-linejoin: round; }
.wood, .thin, .minor { filter: url(#wiggle); }
.wood path { fill: #e3e3e3; }
.water path { fill: #c8c8c8; stroke: #bfbfbf; stroke-width: 1.200px; }
.bay path { fill: #cbcbcb; }
.shore path { fill: none; stroke: #c0c0c0; stroke-width: 7.500px; }
.shore .narrow { stroke-width: 5px; }
.island path { fill: none; stroke: #ddd; stroke-width: 1.500px; }
.creek path { fill: none; stroke: #bdbdbd; stroke-width: 3px; }
.creek .w2 { stroke-width: 5px; }
.thin path, .runway path { fill: none; stroke: #cfcfcf; stroke-width: 1px; }
.minor path { fill: none; stroke: #fcfcfc; stroke-width: 1.600px; }
.mid path { fill: none; stroke: #fff; stroke-width: 2.500px; }
.major path { fill: none; stroke: #fff; stroke-width: 3.600px; }
.border { fill: none; stroke: #b3b3b3; stroke-width: 3px; stroke-dasharray: 7 4; }
.town, .city, .park { fill: #7b7b7b; stroke: #eee; stroke-width: 2px; paint-order: stroke; }
.town { font-size: 22px; }
.city { font-size: 33px; stroke-width: 1px; }
.park { font-size: 15.500px; font-weight: 700; }

.cluster { position: absolute; width: 68px; height: 68px; border: 8.500px solid rgba(181,226,140,.65); border-radius: 50%; background: rgba(134,213,96,.85); background-clip: padding-box; text-align: center; text-indent: -2px; font: 18px/51px "Liberation Sans", Arial, sans-serif; color: #333; }
.yellow { border-color: rgba(241,211,87,.7); background-color: rgba(240,200,70,.85); }
.static { position: static; display: block; width: 66px; height: 66px; line-height: 50px; }
.marker { position: absolute; }
.site { left: 354px; top: 451px; width: 42px; height: 68px; }
.shadow { position: absolute; left: 375px; top: 451px; width: 50px; height: 70px; fill: #000; opacity: .25; filter: blur(3px); }
.house, .lg-home { filter: drop-shadow(0 0 2px rgba(0,0,0,.4)); }
.house { left: 618px; top: 357px; width: 48px; height: 60px; }

.zoom { position: absolute; left: 17px; top: 17px; width: 58px; height: 110px; border: 3.500px solid rgba(0,0,0,.22); border-radius: 7px; background: #fff; background-clip: padding-box; }
.zoom a { height: 51px; display: flex; align-items: center; justify-content: center; padding-top: 9px; }
.zoom a + a { border-top: 2px solid #ccc; padding-top: 10px; }
.map-btns { position: absolute; left: 443px; top: 17.500px; display: flex; gap: 1px; font-size: 20.600px; }
.map-btns a { display: flex; align-items: center; height: 51px; background: #fff; border: 2px solid #ccc; border-radius: 5px; }
.hide { width: 156px; padding-left: 20px; gap: 9px; }
.full { width: 164px; padding-left: 20px; gap: 9.500px; }

.legend { position: absolute; left: 400px; top: 641px; width: 364px; height: 340px; padding: 26px 0 0 14px; background: rgba(255,255,255,.85); border-radius: 8px; box-shadow: 0 0 20px rgba(0,0,0,.2); }
.legend h3 { height: 52px; font-size: 29.500px; line-height: 34px; letter-spacing: .6px; }
.row { display: flex; align-items: center; height: 84px; white-space: nowrap; }
.row span { width: 94px; padding-left: 8px; }
.lg-home { margin-left: 2px; }
.lg-box { display: block; width: 68px; height: 68px; padding: 1px; background: #fff; font-style: normal; }
.attribution { position: absolute; right: 0; bottom: 0; height: 27px; padding: 0 8px 0 10px; background: rgba(255,255,255,.6); font-size: 19.100px; line-height: 27px; white-space: nowrap; }
.attribution a { color: #0078a8; }
.fade { position: absolute; left: 0; right: 0; bottom: 0; height: 58px; background: linear-gradient(rgba(0,0,0,0), rgba(0,0,0,.06)); pointer-events: none; }
```
